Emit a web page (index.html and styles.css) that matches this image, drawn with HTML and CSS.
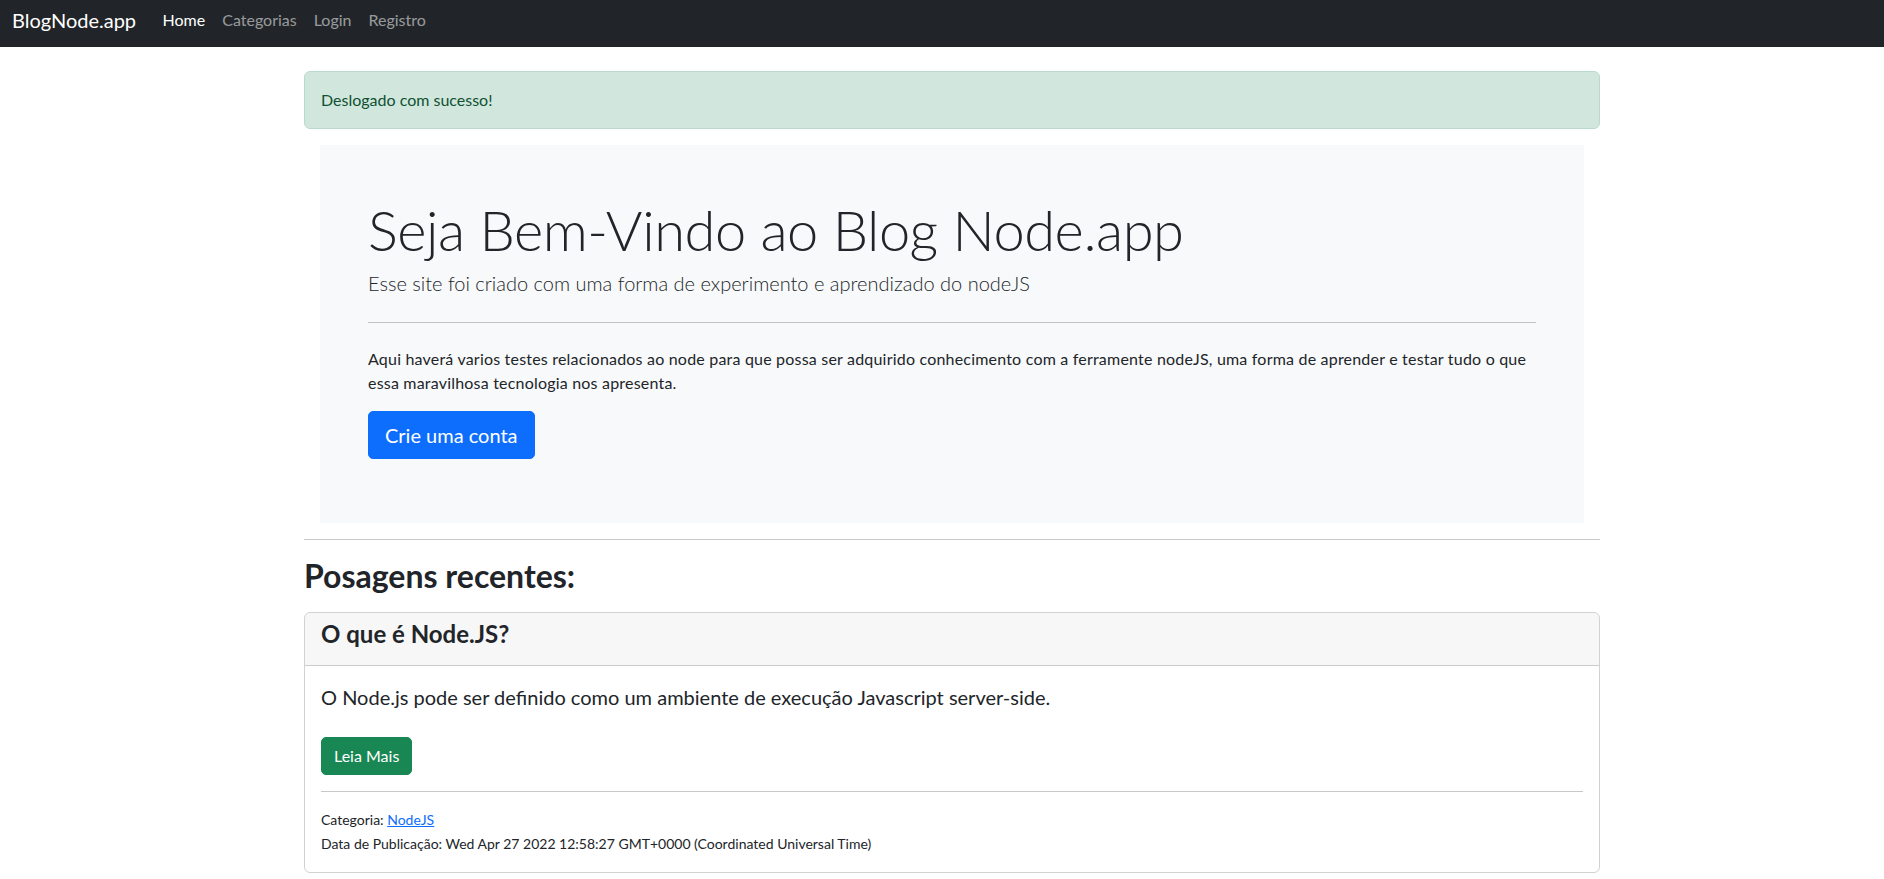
FILE: index.html
```html
<!DOCTYPE html>
<html lang="pt-BR">
<head>
<meta charset="utf-8">
<title>BlogNode.app</title>
<link rel="stylesheet" href="styles.css">
</head>
<body>
<nav class="navbar">
  <a class="brand" href="#">BlogNode.app</a>
  <ul class="nav">
    <li><a class="nav-link active" href="#">Home</a></li>
    <li><a class="nav-link" href="#">Categorias</a></li>
    <li><a class="nav-link" href="#">Login</a></li>
    <li><a class="nav-link" href="#">Registro</a></li>
  </ul>
</nav>

<main class="container">
  <div class="alert">Deslogado com sucesso!</div>

  <section class="jumbotron">
    <h1 class="display">Seja Bem-Vindo ao Blog Node.app</h1>
    <p class="lead">Esse site foi criado com uma forma de experimento e aprendizado do nodeJS</p>
    <hr class="jumbo-rule">
    <p class="intro">Aqui haverá varios testes relacionados ao node para que possa ser adquirido conhecimento com a ferramente nodeJS, uma forma de aprender e testar tudo o que essa maravilhosa tecnologia nos apresenta.</p>
    <div class="actions">
      <a class="btn btn-primary btn-lg" href="#">Crie uma conta</a>
    </div>
  </section>

  <hr class="rule">
  <h2 class="section-title">Posagens recentes:</h2>

  <article class="card">
    <header class="card-header">
      <h4 class="card-title">O que é Node.JS?</h4>
    </header>
    <div class="card-body">
      <p class="card-text">O Node.js pode ser definido como um ambiente de execução Javascript server-side.</p>
      <a class="btn btn-success" href="#">Leia Mais</a>
      <hr class="rule">
      <div class="meta">
        <div>Categoria: <a class="link" href="#">NodeJS</a></div>
        <div>Data de Publicação: Wed Apr 27 2022 12:58:27 GMT+0000 (Coordinated Universal Time)</div>
      </div>
    </div>
  </article>
</main>
</body>
</html>
```
FILE: styles.css
```css
* { box-sizing: border-box; }

body {
  margin: 0;
  font-family: Lato, "Liberation Sans", sans-serif;
  font-size: 16px;
  line-height: 1.5;
  color: #212529;
  background: #fff;
}

/* Navbar */
.navbar {
  display: flex;
  align-items: flex-start;
  height: 47px;
  padding: 0 12px;
  background: #212529;
}
.brand {
  display: block;
  padding-top: 7.6px;
  margin-right: 18px;
  font-size: 20px;
  line-height: 24px;
  color: #fff;
  text-decoration: none;
}
.nav {
  display: flex;
  margin: 0;
  padding: 0;
  list-style: none;
}
.nav-link {
  display: block;
  padding: 10.2px 8.5px 0;
  font-size: 16px;
  line-height: 19.2px;
  color: rgba(255, 255, 255, 0.55);
  text-decoration: none;
}
.nav-link.active { color: #fff; }

/* Page container */
.container {
  width: 1296px;
  margin: 24px 0 0 calc(50% - 638px);
}

/* Alert */
.alert {
  padding: 16px;
  margin-bottom: 16px;
  border: 1px solid #badbcc;
  border-radius: 6px;
  background: #d1e7dd;
  color: #0f5132;
}

/* Jumbotron */
.jumbotron {
  margin: 0 16px;
  padding: 48px;
  background: #f8f9fa;
}
.display {
  margin: 0 0 5px;
  padding-top: 3px;
  font-size: 56px;
  font-weight: 300;
  line-height: 1.2;
  letter-spacing: -0.45px;
}
.lead {
  margin: 0;
  font-size: 20px;
  font-weight: 300;
  line-height: 30px;
}
.jumbo-rule {
  margin: 24px 0;
  border: 0;
  border-top: 1px solid rgba(33, 37, 41, 0.25);
}
.intro {
  margin: 0 0 16px;
  letter-spacing: 0.2px;
}
.actions {
  display: flex;
  margin-bottom: 16px;
}

/* Buttons */
.btn {
  display: inline-block;
  border: 1px solid transparent;
  color: #fff;
  text-decoration: none;
  text-align: center;
}
.btn-lg {
  padding: 8px 16px;
  font-size: 20px;
  line-height: 30px;
  border-radius: 5px;
}
.btn-primary {
  background: #0d6efd;
  border-color: #0d6efd;
}
.btn-success {
  padding: 6px 12px;
  font-size: 16px;
  line-height: 24px;
  border-radius: 5px;
  background: #198754;
  border-color: #198754;
}

/* Rules and headings */
.rule {
  margin: 16px 0;
  border: 0;
  border-top: 1px solid rgba(33, 37, 41, 0.25);
}
.section-title {
  margin: 0 0 17.6px;
  padding-top: 1px;
  font-size: 32px;
  font-weight: 700;
  line-height: 1.2;
}

/* Card */
.card {
  margin-top: -1px;
  border: 1px solid rgba(0, 0, 0, 0.175);
  border-radius: 6px;
  overflow: hidden;
}
.card-header {
  padding: 7px 16px 8px;
  background: rgba(0, 0, 0, 0.03);
  border-bottom: 1px solid rgba(0, 0, 0, 0.175);
}
.card-title {
  margin: 0 0 8px;
  font-size: 24px;
  font-weight: 700;
  line-height: 1.2;
}
.card-body {
  padding: 16px;
}
.card-text {
  margin: 0 0 25px;
  font-size: 20px;
  line-height: 30px;
}
.meta {
  font-size: 14px;
  line-height: 24px;
}
.link {
  color: #0d6efd;
  text-decoration: underline;
}
```
